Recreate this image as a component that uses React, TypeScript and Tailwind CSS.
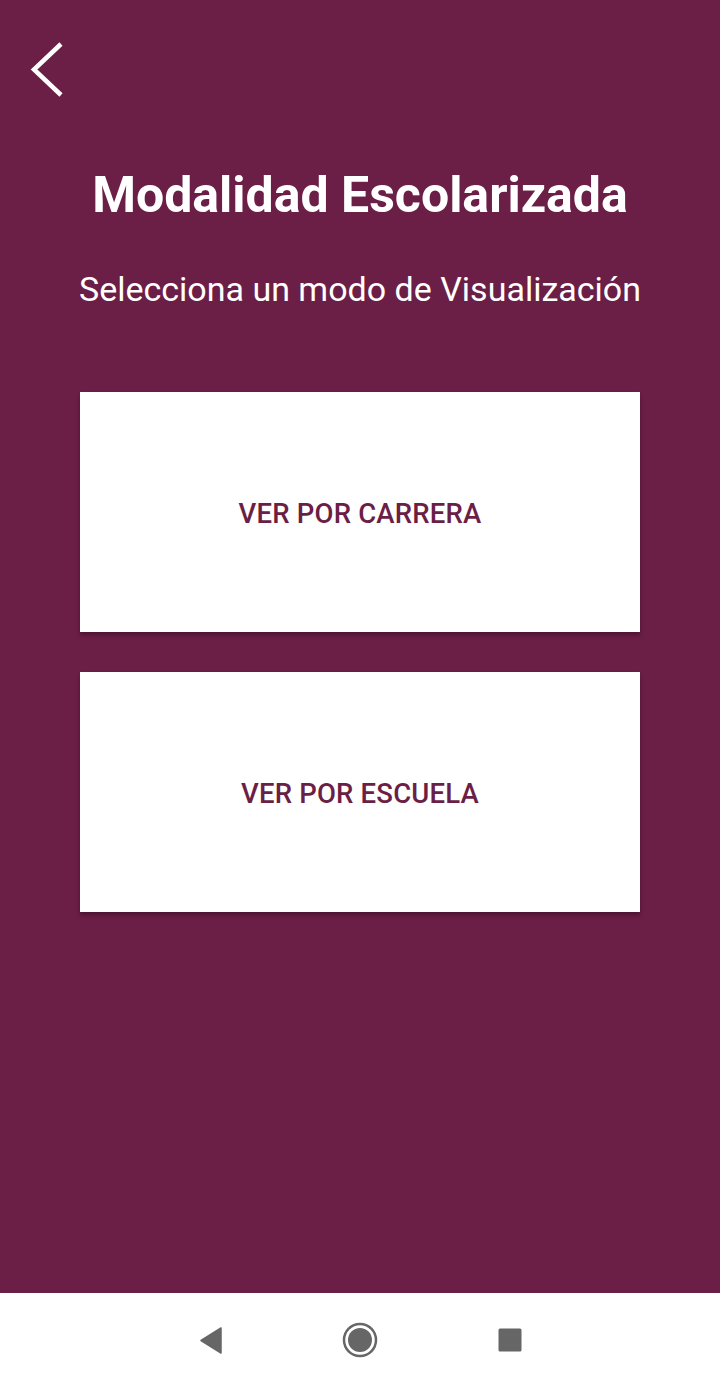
import React from 'react';

const ModeCard: React.FC<{ label: string }> = ({ label }) => (
  <button className="w-[560px] h-[240px] bg-white flex items-center justify-center shadow-[0_3px_4px_rgba(0,0,0,0.3)]">
    <span className="text-[27.5px] font-medium text-[#6b1e46] tracking-[0.2px] pt-[3px]">{label}</span>
  </button>
);

const App: React.FC = () => {
  return (
    <div className="w-[720px] h-[1389px] flex flex-col font-['Roboto',sans-serif]">
      {/* Main screen */}
      <div className="h-[1293px] bg-[#6b1e46] flex flex-col">
        <div className="h-[165px] pl-[28px] pt-[40px]">
          <svg width="40" height="60" viewBox="0 0 40 60" fill="none">
            <path d="M33 4 L6 29.5 L33 55" stroke="white" strokeWidth="4.5" />
          </svg>
        </div>
        <h1 className="text-white text-[50px] font-bold text-center leading-[60px]">Modalidad Escolarizada</h1>
        <p className="text-white text-[34px] text-center leading-[42px] mt-[43px]">Selecciona un modo de Visualización</p>
        <div className="flex flex-col items-center gap-[40px] mt-[82px]">
          <ModeCard label="VER POR CARRERA" />
          <ModeCard label="VER POR ESCUELA" />
        </div>
      </div>

      {/* Android nav bar */}
      <div className="h-[96px] bg-white flex items-center justify-center gap-[110px] pb-[2px]">
        <svg width="40" height="40" viewBox="0 0 40 40">
          <path d="M31 8 L31 33 L11 20.5 Z" fill="#666" strokeLinejoin="round" stroke="#666" strokeWidth="1.5" />
        </svg>
        <svg width="40" height="40" viewBox="0 0 40 40">
          <circle cx="20" cy="20" r="16" fill="none" stroke="#666" strokeWidth="2.5" />
          <circle cx="20" cy="20" r="12" fill="#666" />
        </svg>
        <svg width="40" height="40" viewBox="0 0 40 40">
          <rect x="8.5" y="8.5" width="23" height="23" rx="1.5" fill="#666" />
        </svg>
      </div>
    </div>
  );
};

export default App;
